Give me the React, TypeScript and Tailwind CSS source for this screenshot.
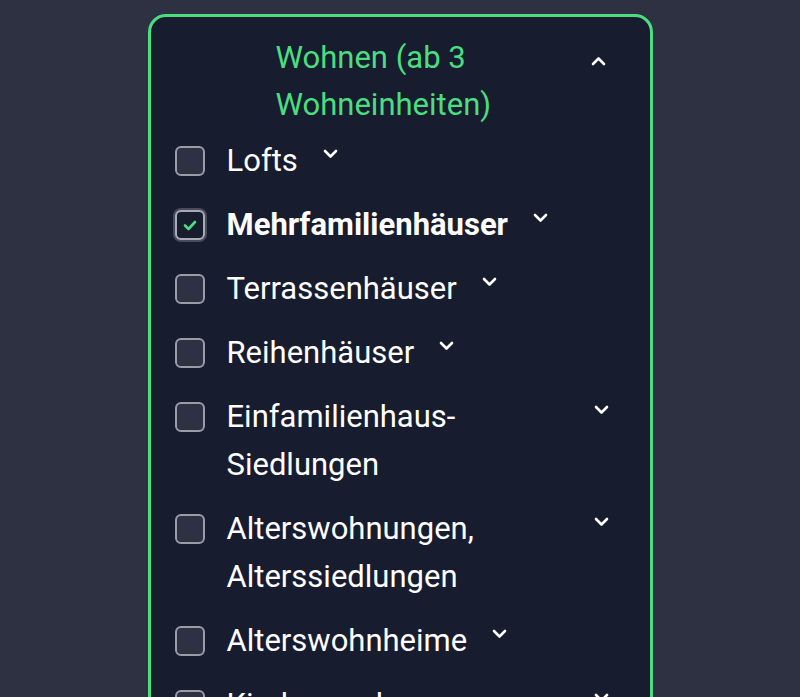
import React from 'react';

interface Category {
  label: string;
  checked?: boolean;
}

const categories: Category[] = [
  { label: 'Lofts' },
  { label: 'Mehrfamilienhäuser', checked: true },
  { label: 'Terrassenhäuser' },
  { label: 'Reihenhäuser' },
  { label: 'Einfamilienhaus-Siedlungen' },
  { label: 'Alterswohnungen, Alterssiedlungen' },
  { label: 'Alterswohnheime' },
  { label: 'Kinder- und Jugendheime' },
];

const Chevron = ({ up = false }: { up?: boolean }) => (
  <svg width="15" height="10" viewBox="0 0 15 10" className="shrink-0">
    <polyline
      points={up ? '2,8 7.5,2.5 13,8' : '2,2 7.5,7.5 13,2'}
      fill="none"
      stroke="#ffffff"
      strokeWidth="2.6"
      strokeLinecap="round"
      strokeLinejoin="round"
    />
  </svg>
);

const Checkbox = ({ checked }: { checked?: boolean }) =>
  checked ? (
    <div className="mt-[9px] flex h-[30px] w-[30px] shrink-0 items-center justify-center rounded-[6px] border-2 border-[#a9abb4] bg-[#181c2f] shadow-[0_0_0_2px_rgba(160,164,180,0.35)]">
      <svg width="14" height="11" viewBox="0 0 14 11">
        <polyline
          points="2,5.5 5.5,9 12,2"
          fill="none"
          stroke="#4ade80"
          strokeWidth="2.6"
          strokeLinecap="round"
          strokeLinejoin="round"
        />
      </svg>
    </div>
  ) : (
    <div className="mt-[9px] h-[30px] w-[30px] shrink-0 rounded-[6px] border-2 border-[#9a9ca6] bg-[#2d3143]" />
  );

const CategoryRow = ({ label, checked }: Category) => (
  <div className="flex items-start">
    <Checkbox checked={checked} />
    <div className="ml-[22px] flex max-w-[382px] items-start">
      <span
        className={
          checked
            ? 'text-[31px] font-bold leading-[48px] text-white'
            : 'text-[31px] leading-[48px] text-white'
        }
      >
        {label}
      </span>
      <div className="ml-[25px] mt-[12px]">
        <Chevron />
      </div>
    </div>
  </div>
);

export default function App() {
  return (
    <div
      className="flex h-[697px] w-full justify-center overflow-hidden bg-[#2d3142]"
      style={{ fontFamily: 'Roboto, "Liberation Sans", sans-serif' }}
    >
      <div className="mt-[14px] h-[800px] w-[505px] shrink-0 rounded-[18px] border-[3px] border-[#4ade80] bg-[#181c2f] pl-[24px] pt-[17px]">
        <div className="flex items-start">
          <div className="ml-[101px] w-[240px] shrink-0 text-[31px] leading-[47px] text-[#4ade80]">
            Wohnen (ab 3 Wohneinheiten)
          </div>
          <div className="ml-[75px] mt-[22px]">
            <Chevron up />
          </div>
        </div>
        <div className="mt-[9px] flex flex-col gap-[16px]">
          {categories.map((c) => (
            <CategoryRow key={c.label} label={c.label} checked={c.checked} />
          ))}
        </div>
      </div>
    </div>
  );
}
